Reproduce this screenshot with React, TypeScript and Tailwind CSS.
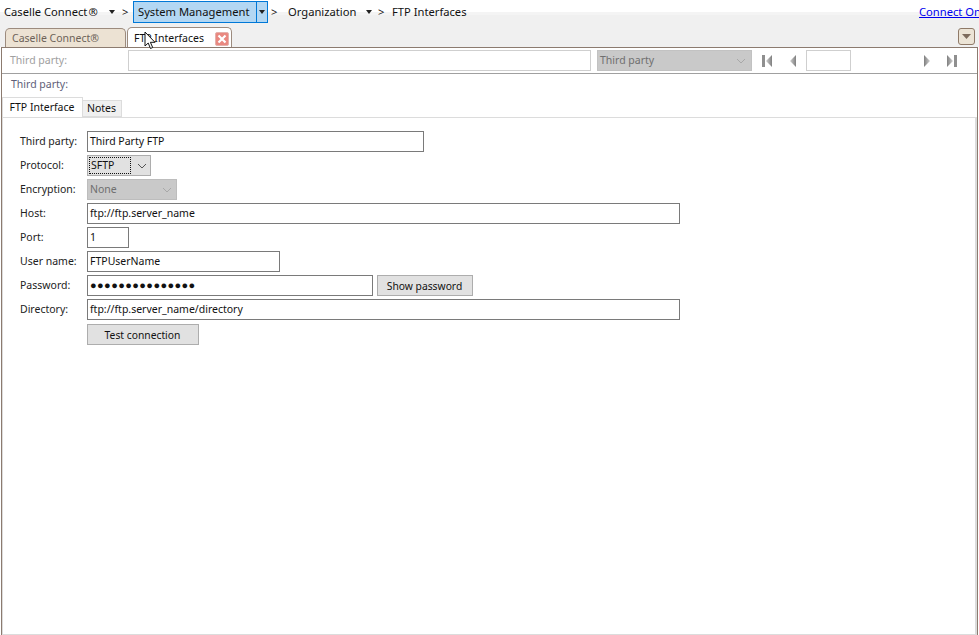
import React from "react";

const FONT = "font-['Noto_Sans','Liberation_Sans',sans-serif]";

function Caret({ color = "#222", w = 6 }: { color?: string; w?: number }) {
  return (
    <svg width={w} height="4" viewBox="0 0 6 4" className="shrink-0">
      <path d="M0 0h6L3 4z" fill={color} />
    </svg>
  );
}

function Chevron({ color = "#555" }: { color?: string }) {
  return (
    <svg width="10" height="6" viewBox="0 0 10 6" className="shrink-0">
      <path d="M1 1l4 4 4-4" fill="none" stroke={color} strokeWidth="1" />
    </svg>
  );
}

function Nav({ dir, end }: { dir: "l" | "r"; end?: boolean }) {
  const flip = dir === "r";
  return (
    <svg width={end ? 10 : 7} height="12" viewBox={end ? "0 0 10 12" : "3 0 7 12"} className="shrink-0" style={flip ? { transform: "scaleX(-1)" } : undefined}>
      <defs>
        <linearGradient id={`g${dir}${end ? 1 : 0}`} x1="0" y1="0" x2="1" y2="0">
          <stop offset="0" stopColor="#d0d0d0" />
          <stop offset="1" stopColor="#7f7f7f" />
        </linearGradient>
      </defs>
      {end && <rect x="0" y="0" width="3" height="12" fill="#8f8f8f" />}
      <path d="M10 0v12L4 6z" fill={`url(#g${dir}${end ? 1 : 0})`} />
    </svg>
  );
}

function Field({ label, children }: { label: string; children: React.ReactNode }) {
  return (
    <div className="flex h-[21px] items-center">
      <div className="w-[67px] shrink-0 text-[10.5px] text-[#222]">{label}</div>
      {children}
    </div>
  );
}

function TextBox({ value, w, dots }: { value: string; w: string; dots?: boolean }) {
  return (
    <div className={`${w} flex h-[21px] items-center overflow-hidden border border-[#7a7a7a] bg-white pl-[2px] text-[#111] ${dots ? "text-[11px] tracking-[0.4px]" : "text-[10.5px]"}`}>
      {value}
    </div>
  );
}

function Button({ label, w }: { label: string; w: string }) {
  return (
    <div className={`${w} flex h-[21px] items-center justify-center border border-[#adadad] bg-[#e1e1e1] pr-[1px] pt-[2px] text-[10.3px] text-[#111]`}>
      {label}
    </div>
  );
}

export default function App() {
  return (
    <div className={`${FONT} flex h-[635px] w-[979px] flex-col overflow-hidden bg-white text-[10.5px]`}>
      {/* Breadcrumb bar */}
      <div className="flex h-[24px] shrink-0 items-start whitespace-nowrap bg-[linear-gradient(to_bottom,#ffffff_0,#ffffff_12px,#f4f4f4_12px,#f4f4f4_15px,#f0f0f0_15px,#f0f0f0_100%)] pl-[4px] pt-[1px] text-[11.2px] text-[#111]">
        <div className="flex h-[22px] w-[105px] items-center">Caselle Connect<span className="ml-[1px]">®</span></div>
        <div className="flex h-[22px] w-[13px] items-center"><Caret /></div>
        <div className="flex h-[22px] w-[11px] items-center">&gt;</div>
        <div className="flex h-[22px] items-center border border-[#0078d7] bg-[#b3d7f3]">
          <span className="flex h-full w-[122px] items-center pl-[4px]">System Management</span>
          <span className="flex h-full w-[11px] items-center justify-center border-l border-[#0078d7]"><Caret /></span>
        </div>
        <div className="ml-[3px] flex h-[22px] w-[17px] items-center">&gt;</div>
        <div className="flex h-[22px] w-[78px] items-center">Organization</div>
        <div className="flex h-[22px] w-[12px] items-center"><Caret /></div>
        <div className="flex h-[22px] w-[14px] items-center">&gt;</div>
        <div className="flex h-[22px] items-center">FTP Interfaces</div>
        <div className="ml-auto flex h-[22px] w-[60px] items-center overflow-hidden text-[#0000ee] underline">Connect Online</div>
      </div>

      {/* Tab strip */}
      <div className="flex h-[23px] shrink-0 items-end bg-[#f0f0f0] pl-[5px] pr-[4px]">
        <div className="flex h-[19px] w-[121px] items-center rounded-t-[5px] border border-b-0 border-[#9c8b7e] bg-[#ece2d3] pl-[6px] pt-[1px] text-[#6d6259]">Caselle Connect®</div>
        <div className="relative z-10 ml-[1px] flex h-[20px] w-[105px] items-center rounded-t-[5px] border border-b-0 border-[#9c8b7e] bg-white pl-[6px] pt-[2px] text-[#111]">
          FTP Interfaces
          <span className="ml-auto mr-[2px] flex h-[14px] w-[14px] items-center justify-center rounded-[2px] border border-[#e6b1ac] bg-[#e98880]">
            <svg width="10" height="10" viewBox="0 0 10 10"><path d="M1.5 1.5l7 7M8.5 1.5l-7 7" stroke="#fff" strokeWidth="2.2" /></svg>
          </span>
          {/* Mouse pointer */}
          <svg className="absolute left-[16px] top-[3px]" width="12" height="19" viewBox="0 0 12 19">
            <path d="M1 1v14l3.2-3 2.3 5.5 2.2-1-2.3-5.2H11z" fill="#fff" stroke="#111" strokeWidth="1" />
          </svg>
        </div>
        <div className="mb-[2px] ml-auto flex h-[17px] w-[17px] items-center justify-center rounded-[3px] border border-[#8f7a68] bg-[#ece4d6]">
          <svg width="9" height="5" viewBox="0 0 9 5"><path d="M0 0h9L4.5 5z" fill="#7d6b5c" /></svg>
        </div>
      </div>

      {/* Framed content */}
      <div className="mx-[1px] flex min-h-0 flex-1 flex-col border-x border-t border-[#8c7b6f] bg-white">
        {/* Filter row */}
        <div className="flex h-[26px] shrink-0 items-center border-b border-[#a0a0a0] pl-[8px] text-[#a0a0a0]">
          <div className="w-[118px] shrink-0">Third party:</div>
          <div className="h-[21px] w-[463px] shrink-0 border border-[#cfcfcf] bg-white" />
          <div className="ml-[6px] flex h-[21px] w-[155px] shrink-0 items-center justify-between border border-[#c2c2c2] bg-[#c9c9c9] pl-[2px] pr-[5px] pt-[1px] text-[#6f6f6f]">
            Third party
            <Chevron color="#a8a8a8" />
          </div>
          <div className="ml-[10px] flex"><Nav dir="l" end /></div>
          <div className="ml-[17px] flex"><Nav dir="l" /></div>
          <div className="ml-[10px] h-[21px] w-[45px] shrink-0 border border-[#cfcfcf] bg-white" />
          <div className="ml-[73px] flex"><Nav dir="r" /></div>
          <div className="ml-[16px] flex"><Nav dir="r" end /></div>
        </div>

        {/* Title row */}
        <div className="flex h-[23px] shrink-0 items-center pb-[2px] pl-[9px] text-[#5e5e78]">Third party:</div>

        {/* Tabs */}
        <div className="flex h-[20px] shrink-0 items-end">
          <div className="flex h-[20px] w-[81px] items-center justify-center border border-b-0 border-[#dcdcdc] bg-white pr-[1px] text-[#111]">FTP Interface</div>
          <div className="flex h-[17px] w-[39px] items-center justify-center border border-l-0 border-[#dcdcdc] bg-[#f0f0f0] pr-[1px] pt-[1px] text-[#111]">Notes</div>
        </div>

        {/* Tab panel */}
        <div className="flex flex-1 flex-col gap-[3px] border border-r-2 border-[#dcdcdc] pl-[17px] pt-[13px]">
          <Field label="Third party:"><TextBox value="Third Party FTP" w="w-[337px]" /></Field>
          <Field label="Protocol:">
            <div className="flex h-[21px] w-[64px] items-center justify-between border border-[#adadad] bg-[#e1e1e1] pl-[1px] pr-[3px] text-[#111]">
              <span className="flex h-[17px] w-[42px] items-center border border-dotted border-[#111] pl-[1px]">SFTP</span>
              <Chevron />
            </div>
          </Field>
          <Field label="Encryption:">
            <div className="flex h-[21px] w-[90px] items-center justify-between border border-[#bdbdbd] bg-[#c9c9c9] pl-[2px] pr-[4px] pt-[1px] text-[#6f6f6f]">
              None
              <Chevron color="#a8a8a8" />
            </div>
          </Field>
          <Field label="Host:"><TextBox value="ftp://ftp.server_name" w="w-[593px]" /></Field>
          <Field label="Port:"><TextBox value="1" w="w-[42px]" /></Field>
          <Field label="User name:"><TextBox value="FTPUserName" w="w-[193px]" /></Field>
          <Field label="Password:">
            <TextBox value="●●●●●●●●●●●●●●●" w="w-[286px]" dots />
            <div className="ml-[4px]"><Button label="Show password" w="w-[96px]" /></div>
          </Field>
          <Field label="Directory:"><TextBox value="ftp://ftp.server_name/directory" w="w-[593px]" /></Field>
          <div className="mt-[1px] pl-[67px]"><Button label="Test connection" w="w-[112px]" /></div>
        </div>
      </div>
    </div>
  );
}
